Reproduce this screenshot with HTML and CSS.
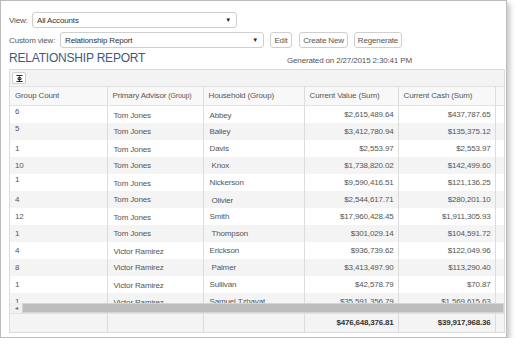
FILE: index.html
```html
<!DOCTYPE html>
<html lang="en">
<head>
  <meta charset="UTF-8">
  <meta name="viewport" content="width=device-width, initial-scale=1.0">
  <title>Relationship Report</title>
  <link rel="stylesheet" href="styles.css">
</head>
<body>
  <div class="frame">
    <div class="filter-row">
      <label class="filter-label view-label">View:</label>
      <div class="select select-view"><span>All Accounts</span><span class="caret">&#9660;</span></div>
    </div>
    <div class="filter-row">
      <label class="filter-label custom-label">Custom view:</label>
      <div class="select select-custom"><span>Relationship Report</span><span class="caret">&#9660;</span></div>
      <button class="btn btn-edit">Edit</button>
      <button class="btn btn-new">Create New</button>
      <button class="btn btn-regen">Regenerate</button>
    </div>

    <div class="report-head">
      <h1 class="report-title">RELATIONSHIP REPORT</h1>
      <span class="generated">Generated on 2/27/2015 2:30:41 PM</span>
    </div>

    <div class="grid">
      <div class="grid-toolbar">
        <button class="tool-btn" title="Expand">
          <svg width="7" height="7" viewBox="0 0 7 7">
            <rect x="0.5" y="0" width="6" height="1" fill="#222"/>
            <polygon points="1,3.4 3.5,1.2 6,3.4" fill="#222"/>
            <polygon points="1,3.8 3.5,6 6,3.8" fill="#222"/>
            <rect x="0.5" y="6" width="6" height="1" fill="#222"/>
          </svg>
        </button>
      </div>

      <table class="grid-table grid-head">
        <colgroup><col class="c1"><col class="c2"><col class="c3"><col class="c4"><col class="c5"><col></colgroup>
        <tr>
          <th>Group Count</th>
          <th>Primary Advisor <span class="small">(Group)</span></th>
          <th>Household (Group)</th>
          <th>Current Value (Sum)</th>
          <th>Current Cash (Sum)</th>
          <th></th>
        </tr>
      </table>

      <div class="grid-body">
        <table class="grid-table">
          <colgroup><col class="c1"><col class="c2"><col class="c3"><col class="c4"><col class="c5"><col></colgroup>
          <tr><td class="up">6</td><td class="dn">Tom Jones</td><td class="dn">Abbey</td><td class="num">$2,615,489.64</td><td class="num">$437,787.65</td><td></td></tr>
          <tr><td class="up">5</td><td>Tom Jones</td><td>Bailey</td><td class="num">$3,412,780.94</td><td class="num">$135,375.12</td><td></td></tr>
          <tr><td>1</td><td class="dn">Tom Jones</td><td>Davis</td><td class="num">$2,553.97</td><td class="num">$2,553.97</td><td></td></tr>
          <tr><td>10</td><td>Tom Jones</td><td class="pad">Knox</td><td class="num">$1,738,820.02</td><td class="num">$142,499.60</td><td></td></tr>
          <tr><td class="up">1</td><td class="dn">Tom Jones</td><td>Nickerson</td><td class="num">$9,590,416.51</td><td class="num">$121,136.25</td><td></td></tr>
          <tr><td>4</td><td>Tom Jones</td><td class="dn pad">Olivier</td><td class="num">$2,544,617.71</td><td class="num">$280,201.10</td><td></td></tr>
          <tr><td>12</td><td class="dn">Tom Jones</td><td>Smith</td><td class="num">$17,960,428.45</td><td class="num">$1,911,305.93</td><td></td></tr>
          <tr><td>1</td><td>Tom Jones</td><td class="pad">Thompson</td><td class="num">$301,029.14</td><td class="num">$104,591.72</td><td></td></tr>
          <tr><td>4</td><td class="dn">Victor Ramirez</td><td>Erickson</td><td class="num">$936,739.62</td><td class="num">$122,049.96</td><td></td></tr>
          <tr><td>8</td><td>Victor Ramirez</td><td class="pad">Palmer</td><td class="num">$3,413,497.90</td><td class="num">$113,290.40</td><td></td></tr>
          <tr><td>1</td><td class="dn">Victor Ramirez</td><td>Sullivan</td><td class="num">$42,578.79</td><td class="num">$70.87</td><td></td></tr>
          <tr><td>1</td><td class="dn">Victor Ramirez</td><td>Samuel Tzhavat</td><td class="num">$35,591,356.79</td><td class="num">$1,569,615.63</td><td></td></tr>
        </table>
      </div>

      <div class="hscroll">
        <span class="hscroll-arrow">&#9666;</span>
        <div class="hscroll-thumb"></div>
      </div>

      <table class="grid-table grid-foot">
        <colgroup><col class="c1"><col class="c2"><col class="c3"><col class="c4"><col class="c5"><col></colgroup>
        <tr>
          <td></td>
          <td></td>
          <td></td>
          <td class="num">$476,648,376.81</td>
          <td class="num">$39,917,968.36</td>
          <td></td>
        </tr>
      </table>
    </div>
  </div>
</body>
</html>
```

FILE: styles.css
```css
* {
  box-sizing: border-box;
}

body {
  margin: 0;
  background-color: #ffffff;
  font-family: 'Liberation Sans', Arial, sans-serif;
  font-size: 8px;
  letter-spacing: -0.15px;
  color: #555;
}

.frame {
  width: 507px;
  height: 338px;
  border: 1px solid #bcbcbc;
  box-shadow: 3px 3px 5px rgba(0, 0, 0, 0.22);
  padding: 11px 2px 0 8px;
}

.filter-row {
  display: flex;
  align-items: center;
  height: 16px;
  margin-bottom: 4px;
}

.filter-label {
  color: #555;
}

.view-label {
  width: 23px;
}

.custom-label {
  width: 51px;
}

.select {
  height: 16px;
  border: 1px solid #cfcfcf;
  border-radius: 3px;
  background-color: #fff;
  display: flex;
  align-items: center;
  justify-content: space-between;
  padding: 0 5px 0 4px;
  color: #333;
}

.select-view {
  width: 205px;
}

.select-custom {
  width: 204px;
}

.caret {
  font-size: 6px;
  color: #222;
}

.btn {
  height: 16px;
  padding: 0;
  border: 1px solid #cfcfcf;
  border-radius: 3px;
  background-color: #fff;
  font-family: inherit;
  font-size: 8px;
  letter-spacing: -0.15px;
  color: #555;
  margin-left: 6px;
}

.btn-edit {
  width: 22px;
}

.btn-new {
  width: 49px;
  margin-left: 7px;
}

.btn-regen {
  width: 48px;
}

.report-head {
  display: flex;
  align-items: flex-start;
  height: 17px;
}

.report-title {
  margin: 0;
  width: 278px;
  font-size: 12px;
  line-height: 12px;
  font-weight: normal;
  letter-spacing: -0.2px;
  color: #3b5b7d;
}

.generated {
  margin-top: 4px;
  color: #555;
}

.grid {
  width: 496px;
  border: 1px solid #dcdcdc;
}

.grid-toolbar {
  height: 17px;
  background-color: #f3f3f3;
  border-bottom: 1px solid #e2e2e2;
  padding: 2px 0 0 2px;
}

.tool-btn {
  width: 14px;
  height: 12px;
  padding: 0;
  border: 1px solid #cfcfcf;
  border-radius: 2px;
  background-color: #fff;
  display: flex;
  align-items: center;
  justify-content: center;
}

.grid-table {
  width: 100%;
  table-layout: fixed;
  border-collapse: collapse;
}

.c1 { width: 97px; }
.c2 { width: 96px; }
.c3 { width: 101px; }
.c4 { width: 94px; }
.c5 { width: 97px; }

.grid-table th,
.grid-table td {
  border-right: 1px solid #dcdcdc;
  padding: 0 4px 0 5px;
  white-space: nowrap;
  overflow: hidden;
  text-align: left;
  font-weight: normal;
}

.grid-table th:last-child,
.grid-table td:last-child {
  border-right: none;
}

.grid-head th {
  height: 18px;
  background-color: #f8f8f8;
  border-bottom: 1px solid #e2e2e2;
  color: #555;
}

.small {
  font-size: 7px;
}

.grid-body {
  height: 197px;
  overflow: hidden;
}

.grid-body td {
  height: 17px;
}

.grid-body tr:nth-child(even) td {
  background-color: #f4f4f4;
}

.grid-body td:nth-child(2),
.grid-body td:nth-child(3) {
  padding-left: 6px;
}

.grid-body td.pad {
  padding-left: 8px;
}

.grid-table td.num {
  text-align: right;
  padding-right: 4px;
}

.grid-body td.up {
  padding-bottom: 5px;
}

.grid-body td.dn {
  padding-top: 3px;
}

.hscroll {
  display: flex;
  height: 10px;
  background-color: #e8e8e8;
}

.hscroll-arrow {
  width: 12px;
  font-size: 6px;
  line-height: 10px;
  text-align: center;
  color: #666;
  background-color: #f0f0f0;
}

.hscroll-thumb {
  flex: 1;
  background-color: #bdbdbd;
  border: 1px solid #d4d4d4;
}

.grid-foot td {
  height: 19px;
  background-color: #f4f4f4;
  border-top: 1px solid #e2e2e2;
  font-size: 8px;
  font-weight: bold;
  letter-spacing: -0.2px;
  color: #333;
}
```
